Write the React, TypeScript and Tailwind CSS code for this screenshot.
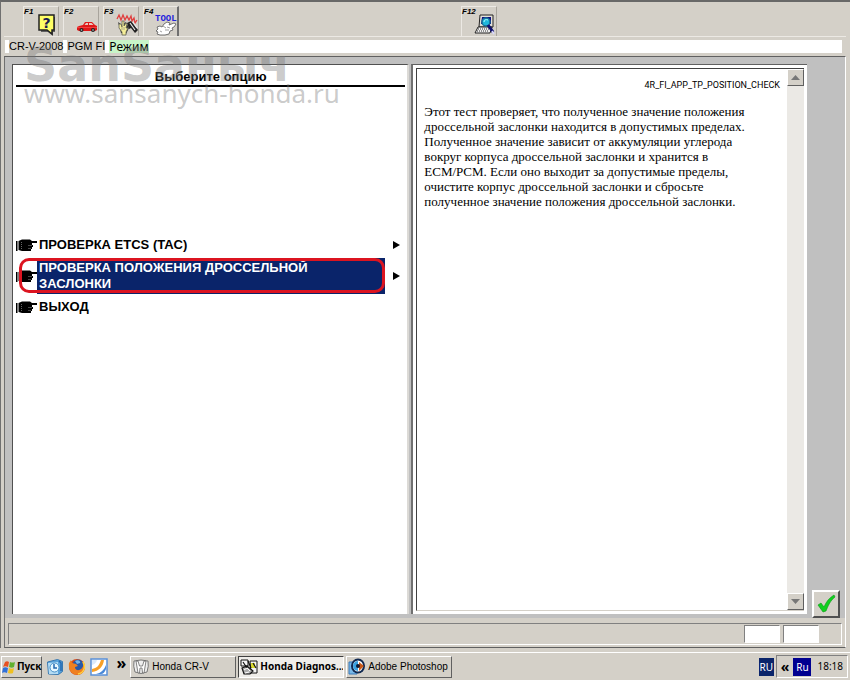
import type { ReactNode } from "react";

const raised = "border border-t-white border-l-white border-r-[#606060] border-b-[#606060]";
const sunken = "border border-t-[#808080] border-l-[#808080] border-r-white border-b-white";

function HelpIcon() {
  return (
    <svg width="22" height="22" viewBox="0 0 22 22" aria-hidden="true">
      <path d="M4 2h14v15h-2v4l-5-4H4z" fill="#606060" transform="translate(1 1)" />
      <path d="M3 1h15v15h-2v4l-5-4H3z" fill="#ffff66" stroke="#222" strokeWidth="1.5" />
      <text x="10.500" y="14" textAnchor="middle" fontFamily="DejaVu Sans, sans-serif" fontWeight="bold" fontSize="14" fill="#1a1a50">?</text>
    </svg>
  );
}

function CarIcon() {
  return (
    <svg width="22" height="22" viewBox="0 0 22 22" aria-hidden="true">
      <path d="M1 16v-3l2-1 4-1 2-3h7l3 3 2 1v4l-2 1H3z" fill="#e01818" />
      <path d="M8.500 11l1.500-2h2v2zM13 9h2.500l2 2H13z" fill="#e8c8c0" />
      <path d="M1 13.500h20" stroke="#f04040" />
      <circle cx="5.500" cy="16" r="2" fill="#222" />
      <circle cx="17" cy="16" r="2" fill="#222" />
      <circle cx="5.500" cy="16" r=".8" fill="#ccc" />
      <circle cx="17" cy="16" r=".8" fill="#ccc" />
    </svg>
  );
}

function RepairIcon() {
  return (
    <svg width="22" height="24" viewBox="0 0 22 24" aria-hidden="true">
      <path d="M1 7l2-4 2 5 2-5 2 5 2-4 2 4 2-4 1 5 2-3 1 5 2-3" stroke="#e04040" strokeWidth="1.300" fill="none" />
      <path d="M11 11l4-2 7 9-3 3-4-5-2 1z" fill="#222" />
      <path d="M2 10l4 3 4-3 3 6-3 6-5-1z" fill="#333" />
      <path d="M14 11l5 7M17 10l4 6" stroke="#e8e8e8" strokeWidth="1.200" />
      <path d="M3 12l2 0 1 3V9h2v5l2-3 1 1-1 4 2 0-2 4v3H6v-3l-3-4z" fill="#f5ee98" stroke="#665" strokeWidth=".8" />
      <path d="M6 15v3M8 15v3" stroke="#998" strokeWidth=".8" />
    </svg>
  );
}

function ToolIcon() {
  return (
    <svg width="22" height="24" viewBox="0 0 22 24" aria-hidden="true">
      <text x="0" y="9" fontFamily="Liberation Mono, monospace" fontWeight="bold" fontSize="9" fill="#2222dd">TOOL</text>
      <path d="M9 12l3-2 3 1-1 2 5-2 2 1-2 3-2 1 1 2-3 1-1 3-4 1H5l-3-1 1-2-2-1 2-2-1-2 3-1 2 1z" fill="#fff" stroke="#666" strokeWidth=".9" />
      <path d="M8 14l3 2M10 18h4M5 19l2 1M12 15l3 1" stroke="#888" strokeWidth=".8" />
    </svg>
  );
}

function ComputerIcon() {
  return (
    <svg width="22" height="22" viewBox="0 0 22 22" aria-hidden="true">
      <path d="M6 1h13v12H5z" fill="#e4e0d8" stroke="#222" />
      <path d="M8 3h9v7H7z" fill="#101080" />
      <path d="M4 13h14l-2 6H1z" fill="#eee" stroke="#222" />
      <path d="M4 15h11M3 17h12" stroke="#333" strokeDasharray="1 1" />
      <circle cx="12" cy="8" r="4" fill="#20b8dc" stroke="#187098" strokeWidth="1.500" />
      <path d="M10 8c0-2 2-3 4-2" stroke="#b0ffff" fill="none" />
      <path d="M14 11l5 7" stroke="#101070" strokeWidth="3" />
      <path d="M18 17l2 3" stroke="#d8d8ff" strokeWidth="1.500" />
    </svg>
  );
}

function HandIcon() {
  return (
    <svg width="21" height="13" viewBox="0 0 21 13" className="shrink-0" aria-hidden="true">
      <path d="M0 2h1.500v10H0z" />
      <path d="M2.500 2L6 .5h8l2 1.500h5v2h-5v2h1v2h-1v2h-1v2H6l-3.500-1z" fill="#000" />
      <path d="M5.500 3v7" stroke="#666" strokeDasharray="1 1" />
      <path d="M12 6.500h4M12 9.500h3" stroke="#777" strokeWidth=".6" />
    </svg>
  );
}

function WindowsIcon() {
  return (
    <svg width="14" height="14" viewBox="0 0 14 14" aria-hidden="true">
      <path d="M3 2q2-1.500 4 0L6 7Q3 5.500 1 7z" fill="#e85020" />
      <path d="M8 2q3 1 5 0l-1 5q-2 1.500-5 0z" fill="#60b030" />
      <path d="M1 8q2-1.500 5 0l-1 5q-3-1.500-5 0z" fill="#3070d8" />
      <path d="M7 8q3 1.500 5 0l-1 5q-2 1-5 0z" fill="#f0c020" />
    </svg>
  );
}

function MessengerIcon() {
  return (
    <svg width="18" height="18" viewBox="0 0 18 18" aria-hidden="true">
      <path d="M1.500 4l10-2.500 5 2v10l-4 3-10-.5z" fill="#5aa4dc" stroke="#3878b0" />
      <path d="M2 5l10-1v12H3z" fill="#b4dcf4" />
      <circle cx="8.500" cy="9.500" r="4.500" fill="#e8f8ff" stroke="#4890c8" />
      <path d="M8 6v4h3M13 3l2 2v8" stroke="#2468b0" strokeWidth="1.500" fill="none" />
    </svg>
  );
}

function FirefoxIcon() {
  return (
    <svg width="18" height="18" viewBox="0 0 18 18" aria-hidden="true">
      <circle cx="9" cy="9" r="8" fill="#d84a14" />
      <circle cx="10" cy="7" r="5.500" fill="#2858a8" />
      <path d="M7 3c3-2 6 0 5 2l-3 1z" fill="#74b4e8" />
      <path d="M1 5l2-3 1 3 4 1 2 2-3 1c0 4 5 4 7 1 2-2 1-5 0-7 5 4 3 12-3 13.500C4 18 0 12 1 5z" fill="#f08020" />
      <path d="M15 4c3 5 1 11-5 12" stroke="#ffd040" strokeWidth="1.500" fill="none" />
    </svg>
  );
}

function PlayerIcon() {
  return (
    <svg width="18" height="18" viewBox="0 0 18 18" aria-hidden="true">
      <rect x="1" y="1" width="16" height="16" fill="#fff" stroke="#5a90d8" strokeWidth="1.500" />
      <path d="M2 11c5-1 7-3 9-9h3C13 9 9 13 2 14z" fill="#f8a028" />
      <path d="M6 16c5-1 8-4 10-9v4c-1 3-3 5-5 5z" fill="#4888d8" />
      <path d="M2 7c3-1 4-2 5-5H2z" fill="#dceafa" />
    </svg>
  );
}

function HondaIcon() {
  return (
    <svg width="18" height="16" viewBox="0 0 18 16" aria-hidden="true">
      <path d="M2 2q7-2 14 0 1 5-1 11-6 3-12 0Q1 7 2 2z" fill="#eee" stroke="#777" />
      <path d="M4 2l2 12h1.500L8 9h2l.5 5H12l2-12h-2l-1.500 5h-3L6 2z" fill="#fff" stroke="#666" strokeWidth=".8" />
    </svg>
  );
}

function DiagnosticIcon() {
  return (
    <svg width="18" height="16" viewBox="0 0 18 16" aria-hidden="true">
      <path d="M1 1h7v6H1zM10 2h7v12h-6z" fill="#f5f5f5" stroke="#111" />
      <path d="M11 4h4v5h-4z" fill="#d8d830" />
      <path d="M3 3l4 6M8 2l3 7M2 9l5-2 6 5-3 3H4zM13 4l3 5" stroke="#111" strokeWidth="1.200" fill="#aaa" />
      <path d="M4 11l3-2 3 3M5 14l4-1" stroke="#fff" fill="none" />
    </svg>
  );
}

function PhotoshopIcon() {
  return (
    <svg width="18" height="18" viewBox="0 0 18 18" aria-hidden="true">
      <path d="M1 4h8v12H1z" fill="#78b8e8" stroke="#3878b8" />
      <ellipse cx="10" cy="8" rx="7" ry="7.500" fill="#102850" />
      <ellipse cx="10" cy="8" rx="5" ry="5.500" fill="#fff" />
      <path d="M10 3a5 5 0 0 0 0 10z" fill="#38a0e0" />
      <path d="M11 4l5 4-5 5z" fill="#c85818" />
      <circle cx="10" cy="8" r="2" fill="#101830" />
    </svg>
  );
}

function Arrow() {
  return (
    <svg width="7" height="8" viewBox="0 0 7 8" aria-hidden="true">
      <path d="M0 0l7 4-7 4z" fill="#000" />
    </svg>
  );
}

const tools = [
  { key: "F1", icon: <HelpIcon /> },
  { key: "F2", icon: <CarIcon /> },
  { key: "F3", icon: <RepairIcon /> },
  { key: "F4", icon: <ToolIcon /> },
];

const options = [
  { label: "ПРОВЕРКА ETCS (TAC)", submenu: true, selected: false },
  { label: "ПРОВЕРКА ПОЛОЖЕНИЯ ДРОССЕЛЬНОЙ ЗАСЛОНКИ", submenu: true, selected: true },
  { label: "ВЫХОД", submenu: false, selected: false },
];

const tasks = [
  { label: "Honda CR-V", icon: <HondaIcon />, active: false },
  { label: "Honda Diagnos...", icon: <DiagnosticIcon />, active: true },
  { label: "Adobe Photoshop", icon: <PhotoshopIcon />, active: false },
];

function ToolButton({ name, children }: { name: string; children: ReactNode }) {
  return (
    <button className={`relative flex h-[30px] w-9 items-end justify-end border border-b-0 border-t-[#ece9e4] border-l-[#ece9e4] ${name === "F4" ? "border-r-2 border-r-[#707070]" : "border-r-[#a8a49c]"}`}>
      <span className="absolute top-0 left-0 text-[8px] leading-[10px] font-bold italic">{name}</span>
      {children}
    </button>
  );
}

function ScrollButton({ down }: { down?: boolean }) {
  return (
    <button aria-label={down ? "Вниз" : "Вверх"} className={`flex h-[17px] w-[17px] items-center justify-center bg-[#d4d0c8] ${raised}`}>
      <svg width="9" height="5" viewBox="0 0 9 5" aria-hidden="true">
        <path d={down ? "M0 0h9L4.500 5z" : "M0 5h9L4.500 0z"} fill="#777" />
      </svg>
    </button>
  );
}

export default function App() {
  return (
    <div className="flex min-h-screen flex-col overflow-hidden bg-[#d4d0c8] font-['Liberation_Sans',sans-serif] text-black">
      <div className="flex flex-1 flex-col border-t-2 border-l border-t-[#686868] border-l-[#707070] pr-1 pl-[3px]">
        <header>
          <div className="flex gap-1 border-b border-[#ece9e4] pt-1 pl-[19px]">
            {tools.map((t) => (
              <ToolButton key={t.key} name={t.key}>{t.icon}</ToolButton>
            ))}
            <div className="ml-[278px]">
              <ToolButton name="F12"><ComputerIcon /></ToolButton>
            </div>
          </div>
          <nav className="mt-[3px] mr-1 ml-px flex h-[13px] gap-1 bg-white pl-1 text-[11px] leading-[13px]">
            <span className="bg-[#d4d0c8]">CR-V-2008</span>
            <span className="bg-[#d4d0c8]">PGM FI</span>
            <span className="bg-[#c8f5c8] font-['Noto_Sans',sans-serif] text-[12px]">Режим</span>
          </nav>
        </header>

        <main className="relative mt-[3px] flex flex-1 border-t border-l border-r border-t-[#606060] border-l-[#707070] border-r-white bg-[#c0c0c0] pt-[7px] pb-1 pl-[7px]">
          <section className="flex min-w-0 flex-1 flex-col border-t border-r-2 border-l border-t-[#505050] border-r-[#dcdad6] border-l-[#505050] bg-white">
            <h1 className="mr-[2px] ml-[3px] border-b-2 border-black pt-[3px] text-center text-[13px] leading-[17px] font-bold">Выберите опцию</h1>
            <ul className="mt-[148px] flex flex-col gap-[3px] pl-[3px] text-[13px] leading-4 font-bold">
              {options.map((o) => (
                <li key={o.label}>
                  <button className="relative flex w-full items-center text-left">
                    <HandIcon />
                    <span className={`mr-2 min-w-0 flex-1 px-[2px] py-[2px] ${o.selected ? "bg-[#0a246a] text-white" : ""}`}>
                      <span className={`block ${o.selected ? "max-w-[300px]" : ""}`}>{o.label}</span>
                    </span>
                    <span className="w-[14px]">{o.submenu && <Arrow />}</span>
                    {o.selected && <span className="absolute top-0 right-[22px] bottom-px left-[3px] rounded-[10px] border-3 border-[#dc1420]" />}
                  </button>
                </li>
              ))}
            </ul>
          </section>

          <section className="ml-[2px] flex w-[47.5%] border-t border-l-2 border-t-[#606060] border-l-[#707070] bg-white p-[3px]">
            <div className="flex min-w-0 flex-1 border-t border-b border-l border-t-[#404040] border-b-[#d4d0c8] border-l-[#404040]">
              <article className="min-w-0 flex-1 px-[7px]">
                <p className="pt-[9px] text-right font-['Roboto',sans-serif] text-[9px] leading-[14px]">4R_FI_APP_TP_POSITION_CHECK</p>
                <p className="mt-3 pr-5 font-['Liberation_Serif',serif] text-[13px] leading-[15px]">
                  Этот тест проверяет, что полученное значение положения дроссельной заслонки находится в допустимых пределах. Полученное значение зависит от аккумуляции углерода вокруг корпуса дроссельной заслонки и хранится в ECM/PCM. Если оно выходит за допустимые пределы, очистите корпус дроссельной заслонки и сбросьте полученное значение положения дроссельной заслонки.
                </p>
              </article>
              <div className="flex w-[17px] flex-col justify-between bg-[#ebe9e5]">
                <ScrollButton />
                <ScrollButton down />
              </div>
            </div>
          </section>

          <aside className="flex w-[38px] items-end justify-center">
            <button aria-label="OK" className="-mb-1 flex h-7 w-7 items-center justify-center border-2 border-t-white border-r-[#505050] border-b-[#505050] border-l-white bg-[#d4d0c8]">
              <svg width="20" height="20" viewBox="0 0 20 20" aria-hidden="true">
                <path d="M2 11l3-2 3 4C10 8 13 4 18 1l1 2c-5 4-7 9-9 14l-3 1z" fill="#10d020" stroke="#079810" strokeWidth=".6" />
              </svg>
            </button>
          </aside>

          <div aria-hidden="true" className="pointer-events-none absolute -top-2 left-[19px] whitespace-nowrap text-[#777]/40">
            <div className="font-['DejaVu_Sans',sans-serif] text-[46px] leading-[32px] font-bold">SanSaныч</div>
            <div className="-mt-[2px] font-['Noto_Sans',sans-serif] text-[26px] leading-[28px]">www.sansanych-honda.ru</div>
          </div>
        </main>

        <footer className="flex border-r border-b border-l border-r-white border-b-[#606060] border-l-[#707070] pt-[5px] pr-[3px] pb-[2px] pl-[3px]">
          <div className={`flex h-[22px] flex-1 justify-end gap-[3px] pt-px pr-[22px] pb-px ${sunken}`}>
            <div className={`w-9 bg-white ${sunken}`} />
            <div className={`w-9 bg-white ${sunken}`} />
          </div>
        </footer>
      </div>

      <div className="mt-1 flex h-7 items-center border-t border-white pl-px text-[10px]">
        <button className={`flex h-[22px] items-center gap-px bg-[#d4d0c8] font-['Noto_Sans',sans-serif] font-bold ${raised}`}>
          <WindowsIcon />
          <span>Пуск</span>
        </button>
        <div className="ml-1 flex gap-1">
          <button aria-label="Messenger"><MessengerIcon /></button>
          <button aria-label="Firefox"><FirefoxIcon /></button>
          <button aria-label="Player"><PlayerIcon /></button>
        </div>
        <button className="ml-2 pb-2 font-['Noto_Sans',sans-serif] text-[16px] leading-4 font-bold">»</button>
        <div className="ml-1 flex min-w-0 gap-[2px]">
          {tasks.map((t) => (
            <button key={t.label} className={`flex h-[22px] w-[106px] items-center gap-[2px] overflow-hidden pl-px whitespace-nowrap ${t.active ? "border border-t-[#404040] border-r-white border-b-white border-l-[#404040] bg-[#efede9] font-['Noto_Sans',sans-serif] font-bold" : raised}`}>
              <span className="shrink-0">{t.icon}</span>
              {t.label}
            </button>
          ))}
        </div>
        <div className="mr-[2px] ml-auto flex items-center gap-[2px] font-['Noto_Sans',sans-serif]">
          <span className="h-[18px] w-[15px] bg-[#0a246a] text-center leading-[18px] text-white">RU</span>
          <div className={`flex h-[23px] items-center pr-1 pl-1 ${sunken}`}>
            <button className="text-[14px] leading-4 font-bold">«</button>
            <span className="ml-1 h-[18px] w-[18px] bg-[#000090] text-center leading-[18px] text-white">Ru</span>
            <time className="ml-[6px]">18:18</time>
          </div>
        </div>
      </div>
    </div>
  );
}
